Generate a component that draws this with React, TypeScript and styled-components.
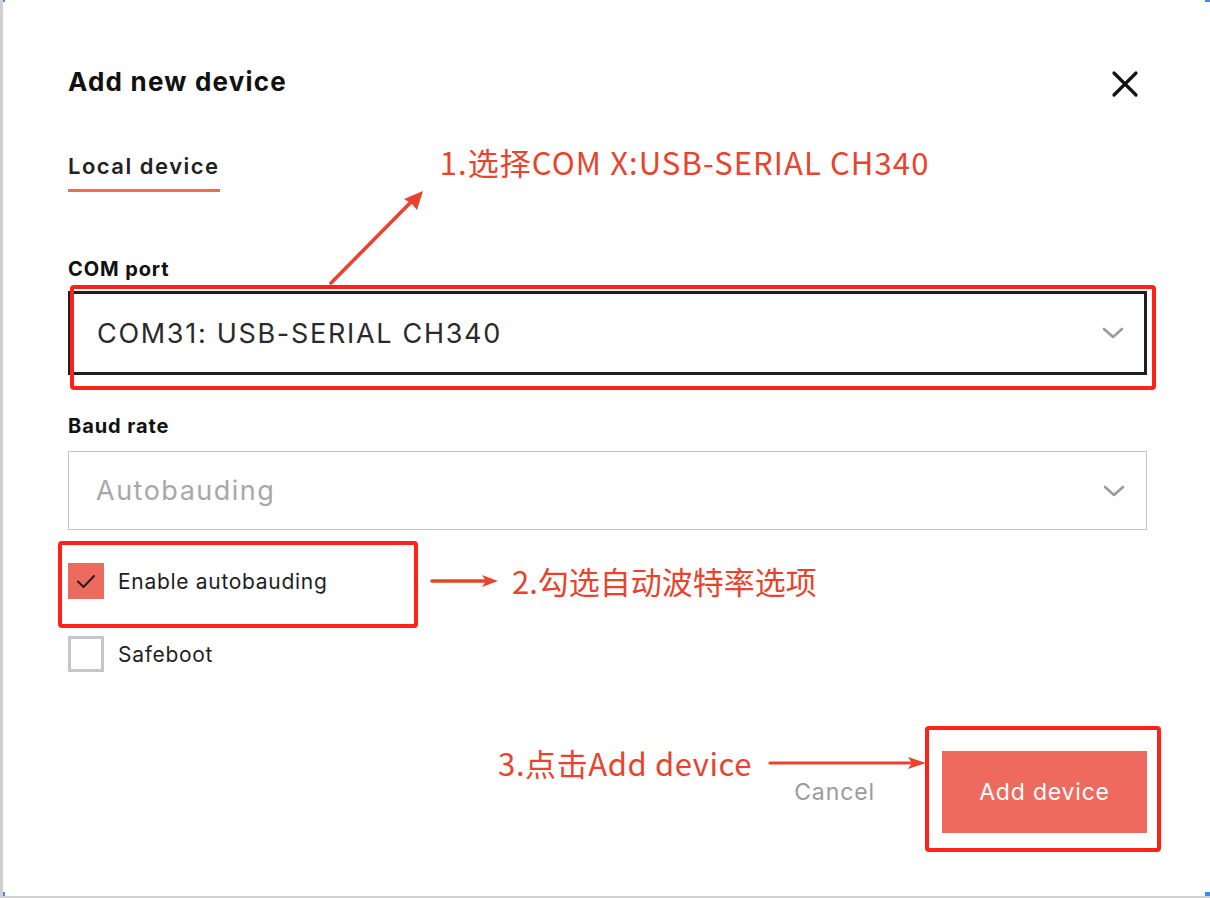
import styled, { createGlobalStyle } from "styled-components";

const GlobalStyle = createGlobalStyle`
  html, body {
    margin: 0;
    padding: 0;
    background: #ffffff;
  }
  body {
    font-family: Inter, "Noto Sans", "Liberation Sans", sans-serif;
    color: #1c1c1c;
  }
`;

const ANNOT = "#e9432d";
const MARK = "#ff2216";
const CORAL = "#ef6a5e";

const ChevronIcon = () => (
  <svg width="22" height="12" viewBox="0 0 22 12" fill="none">
    <path d="M2 2 L11 10 L20 2" stroke="#9a9a9a" strokeWidth="2.6" strokeLinecap="round" strokeLinejoin="round" />
  </svg>
);

const CheckIcon = () => (
  <svg width="36" height="36" viewBox="0 0 36 36" fill="none">
    <path d="M10 18.5 L15.5 24 L26 13" stroke="#1e1e1e" strokeWidth="2" strokeLinecap="round" strokeLinejoin="round" />
  </svg>
);

const App = () => {
  return (
    <>
      <GlobalStyle />
      <Frame>
        <Corner $pos="tl" />
        <Corner $pos="tr" />
        <Corner $pos="bl" />
        <Corner $pos="br" />

        <Dialog>
          <Header>
            <Title>Add new device</Title>
            <CloseButton aria-label="close">
              <svg width="28" height="28" viewBox="0 0 28 28" fill="none">
                <path d="M3 3 L25 25 M25 3 L3 25" stroke="#111" strokeWidth="3.2" strokeLinecap="round" />
              </svg>
            </CloseButton>
          </Header>

          <TabRow>
            <Tab>Local device</Tab>
            <Note $spacing={1.1}>1.选择COM X:USB-SERIAL CH340</Note>
          </TabRow>

          <Field $gap={10}>
            <Label>COM port</Label>
            <Select $active>
              <SelectText>COM31: USB-SERIAL CH340</SelectText>
              <ChevronIcon />
              <Mark $t={-9} $l={-1} $r={-12} $b={-18} />
            </Select>
          </Field>

          <Field $gap={13} $top={39}>
            <Label>Baud rate</Label>
            <Select>
              <SelectText $muted>Autobauding</SelectText>
              <ChevronIcon />
            </Select>
          </Field>

          <CheckRow $top={31}>
            <CheckItem>
              <Box $checked>
                <CheckIcon />
              </Box>
              <CheckLabel>Enable autobauding</CheckLabel>
              <Mark $t={-22} $l={-10} $r={12} $b={-29} />
            </CheckItem>
            <svg width="70" height="14" viewBox="0 0 70 14" fill="none">
              <path d="M2 7 H58" stroke={ANNOT} strokeWidth="3.4" strokeLinecap="round" />
              <path d="M52 1 L68 7 L52 13 L56 7 Z" fill={ANNOT} />
            </svg>
            <Note $left={12}>2.勾选自动波特率选项</Note>
          </CheckRow>

          <CheckRow $top={35}>
            <CheckItem>
              <Box />
              <CheckLabel>Safeboot</CheckLabel>
            </CheckItem>
          </CheckRow>

          <Footer>
            <StepThree>
              <Note $spacing={0.6}>3.点击Add device</Note>
              <svg width="160" height="14" viewBox="0 0 160 14" fill="none">
                <path d="M2 7 H146" stroke={ANNOT} strokeWidth="3.2" strokeLinecap="round" />
                <path d="M140 1 L158 7 L140 13 L144 7 Z" fill={ANNOT} />
              </svg>
            </StepThree>
            <CancelButton>Cancel</CancelButton>
            <PrimaryButton>
              Add device
              <Mark $t={-25} $l={-17} $r={-14} $b={-19} />
            </PrimaryButton>
          </Footer>
        </Dialog>

        <StepOneArrow width="110" height="100" viewBox="0 0 110 100" fill="none">
          <path d="M6 93 L90 8" stroke={ANNOT} strokeWidth="3.6" strokeLinecap="round" />
          <path d="M98 1 L92 20 L87 14 L79 9 Z" fill={ANNOT} />
        </StepOneArrow>
      </Frame>
    </>
  );
};

const Frame = styled.div`
  position: relative;
  width: 1210px;
  height: 898px;
  box-sizing: border-box;
  border-left: 3px solid #cfcfcf;
  border-bottom: 2px solid #d2d2d2;
  background: #ffffff;
  overflow: hidden;
`;

const Corner = styled.span<{ $pos: "tl" | "tr" | "bl" | "br" }>`
  position: absolute;
  width: 5px;
  height: ${({ $pos }) => ($pos.startsWith("t") ? "2px" : "6px")};
  background: #3d8bf2;
  ${({ $pos }) => ($pos.startsWith("t") ? "top: 0;" : "bottom: -2px;")}
  ${({ $pos }) => ($pos.endsWith("l") ? "left: -3px;" : "right: 0;")}
`;

const Dialog = styled.div`
  display: flex;
  flex-direction: column;
  padding: 65px 63px 0 65px;
`;

const Header = styled.div`
  display: flex;
  justify-content: space-between;
  align-items: center;
  height: 34px;
`;

const Title = styled.h1`
  margin: 0;
  font-size: 26px;
  line-height: 32px;
  font-weight: 700;
  color: #111;
  letter-spacing: 1.2px;
`;

const CloseButton = styled.button`
  display: flex;
  padding: 0;
  margin: 4px 8px 0 0;
  border: none;
  background: none;
`;

const TabRow = styled.div`
  display: flex;
  align-items: flex-start;
  margin-top: 53px;
`;

const Tab = styled.div`
  font-size: 22px;
  line-height: 28px;
  font-weight: 600;
  color: #222;
  letter-spacing: 1.5px;
  padding-bottom: 9px;
  border-bottom: 3px solid ${CORAL};
`;

const Note = styled.span<{ $left?: number; $spacing?: number }>`
  font-family: "Noto Sans CJK SC", "Noto Sans", sans-serif;
  font-size: 31px;
  line-height: 40px;
  color: ${ANNOT};
  white-space: nowrap;
  letter-spacing: ${({ $spacing }) => $spacing ?? 0}px;
  margin-left: ${({ $left }) => $left ?? 0}px;
  ${TabRow} & {
    margin-left: 220px;
    margin-top: -10px;
  }
`;

const Field = styled.div<{ $gap: number; $top?: number }>`
  display: flex;
  flex-direction: column;
  gap: ${({ $gap }) => $gap}px;
  margin-top: ${({ $top }) => $top ?? 65}px;
`;

const Label = styled.label`
  font-size: 20px;
  line-height: 24px;
  font-weight: 700;
  color: #111;
  letter-spacing: 0.9px;
`;

const Select = styled.div<{ $active?: boolean }>`
  position: relative;
  display: flex;
  align-items: center;
  justify-content: space-between;
  box-sizing: border-box;
  height: ${({ $active }) => ($active ? 84 : 79)}px;
  padding: 0 ${({ $active }) => ($active ? 20 : 21)}px 0 ${({ $active }) => ($active ? 26 : 27)}px;
  border: ${({ $active }) => ($active ? "3px solid #1f1f1f" : "1px solid #c4c4c4")};
  background: #fff;
`;

const SelectText = styled.span<{ $muted?: boolean }>`
  font-size: 27px;
  color: ${({ $muted }) => ($muted ? "#a8a8a8" : "#2a2a2a")};
  letter-spacing: ${({ $muted }) => ($muted ? 1.5 : 1.7)}px;
`;

const Mark = styled.span<{ $t: number; $l: number; $r: number; $b: number }>`
  position: absolute;
  top: ${({ $t }) => $t}px;
  left: ${({ $l }) => $l}px;
  right: ${({ $r }) => $r}px;
  bottom: ${({ $b }) => $b}px;
  border: 4px solid ${MARK};
  border-radius: 4px;
  pointer-events: none;
`;

const CheckRow = styled.div<{ $top: number }>`
  display: flex;
  align-items: center;
  margin-top: ${({ $top }) => $top}px;
`;

const CheckItem = styled.div`
  position: relative;
  display: flex;
  align-items: center;
  gap: 14px;
  width: 362px;
`;

const Box = styled.span<{ $checked?: boolean }>`
  display: flex;
  box-sizing: border-box;
  width: 36px;
  height: 36px;
  background: ${({ $checked }) => ($checked ? CORAL : "#fff")};
  border: ${({ $checked }) => ($checked ? "none" : "3px solid #c6c6c6")};
`;

const CheckLabel = styled.span`
  font-size: 21px;
  color: #1e1e1e;
  letter-spacing: 0.7px;
`;

const Footer = styled.div`
  position: relative;
  display: flex;
  justify-content: flex-end;
  align-items: center;
  margin-top: 79px;
`;

const StepThree = styled.div`
  position: absolute;
  right: 219px;
  top: -8px;
  display: flex;
  align-items: center;
  gap: 16px;
`;

const CancelButton = styled.button`
  border: none;
  background: none;
  font-family: inherit;
  font-size: 23px;
  color: #9b9b9b;
  letter-spacing: 0.9px;
  padding: 0;
  margin-right: 67px;
`;

const PrimaryButton = styled.button`
  position: relative;
  width: 205px;
  height: 82px;
  border: none;
  background: ${CORAL};
  color: #fff;
  font-family: inherit;
  font-size: 23px;
  font-weight: 400;
  letter-spacing: 0.8px;
`;

const StepOneArrow = styled.svg`
  position: absolute;
  left: 322px;
  top: 190px;
`;

export default App;
